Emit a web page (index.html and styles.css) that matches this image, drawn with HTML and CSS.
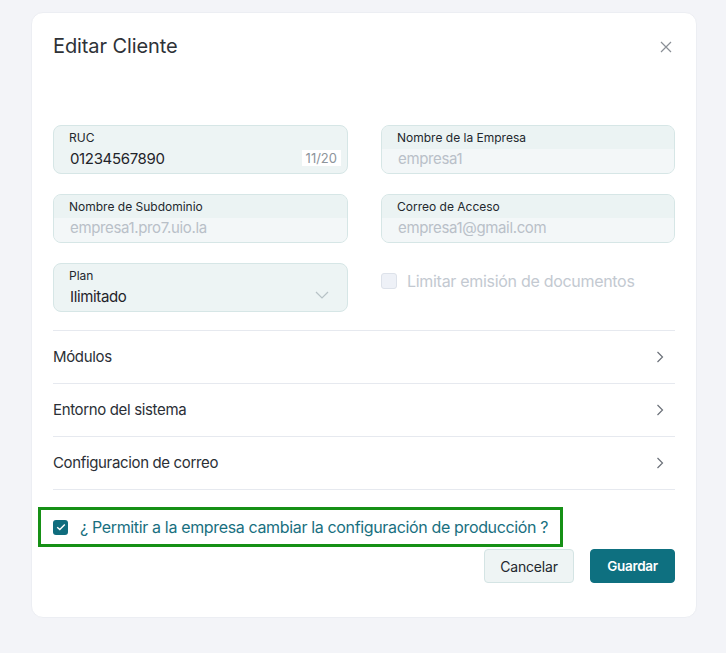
FILE: index.html
```html
<!DOCTYPE html>
<html lang="es">
<head>
<meta charset="utf-8">
<link rel="stylesheet" href="styles.css">
</head>
<body>
<div class="backdrop">
  <div class="modal">
    <div class="modal-header">
      <h1 class="title">Editar Cliente</h1>
      <button class="close" aria-label="Cerrar">
        <svg width="12" height="12" viewBox="0 0 12 12"><path d="M1 1L11 11M11 1L1 11" stroke="#8a8f96" stroke-width="1.2" fill="none"/></svg>
      </button>
    </div>

    <div class="fields">
      <div class="field">
        <div class="field-label">RUC</div>
        <div class="field-value">01234567890<span class="counter">11/20</span></div>
      </div>
      <div class="field disabled">
        <div class="field-label">Nombre de la Empresa</div>
        <div class="field-value">empresa1</div>
      </div>
      <div class="field disabled">
        <div class="field-label">Nombre de Subdominio</div>
        <div class="field-value">empresa1.pro7.uio.la</div>
      </div>
      <div class="field disabled">
        <div class="field-label">Correo de Acceso</div>
        <div class="field-value">empresa1@gmail.com</div>
      </div>
      <div class="field">
        <div class="field-label">Plan</div>
        <div class="field-value">Ilimitado
          <svg class="chev-down" width="14" height="8" viewBox="0 0 14 8"><path d="M1 1L7 7L13 1" stroke="#b7c2c6" stroke-width="1.2" fill="none"/></svg>
        </div>
      </div>
      <label class="check-disabled">
        <span class="box-disabled"></span>
        <span>Limitar emisión de documentos</span>
      </label>
    </div>

    <div class="sections">
      <div class="section-row"><span>Módulos</span><svg width="8" height="12" viewBox="0 0 8 12"><path d="M1.5 1L6.5 6L1.5 11" stroke="#6b7079" stroke-width="1.2" fill="none"/></svg></div>
      <div class="section-row"><span>Entorno del sistema</span><svg width="8" height="12" viewBox="0 0 8 12"><path d="M1.5 1L6.5 6L1.5 11" stroke="#6b7079" stroke-width="1.2" fill="none"/></svg></div>
      <div class="section-row"><span>Configuracion de correo</span><svg width="8" height="12" viewBox="0 0 8 12"><path d="M1.5 1L6.5 6L1.5 11" stroke="#6b7079" stroke-width="1.2" fill="none"/></svg></div>
    </div>

    <div class="permit">
      <span class="box-checked">
        <svg width="10" height="8" viewBox="0 0 10 8"><path d="M1.2 4.2L3.8 6.6L8.8 1.4" stroke="#fff" stroke-width="1.4" fill="none"/></svg>
      </span>
      <span class="permit-text">¿ Permitir a la empresa cambiar la configuración de producción ?</span>
    </div>

    <div class="actions">
      <button class="btn btn-cancel">Cancelar</button>
      <button class="btn btn-save">Guardar</button>
    </div>
  </div>
</div>
</body>
</html>
```
FILE: styles.css
```css
* { box-sizing: border-box; }
html, body { margin: 0; padding: 0; }
body {
  width: 726px;
  height: 653px;
  background: #f3f4f8;
  font-family: Inter, "Noto Sans", "Liberation Sans", sans-serif;
  color: #2b2f36;
  overflow: hidden;
}
.backdrop {
  padding: 12px 0 0 31px;
}
.modal {
  width: 666px;
  height: 606px;
  background: #fff;
  border-radius: 12px;
  border: 1px solid #eceef3;
  padding: 21px 21px 0 21px;
  display: flex;
  flex-direction: column;
}
.modal-header {
  display: flex;
  justify-content: space-between;
  align-items: flex-start;
  height: 91px;
}
.title {
  margin: 0;
  font-size: 20px;
  font-weight: 400;
  line-height: 24px;
  color: #2e3237;
  letter-spacing: -0.1px;
}
.close {
  border: 0;
  background: none;
  padding: 0;
  margin: 7px 3px 0 0;
  width: 12px;
  height: 12px;
  display: flex;
}
.fields {
  display: grid;
  grid-template-columns: 295px 294px;
  column-gap: 33px;
  row-gap: 20px;
}
.field {
  height: 49px;
  border: 1px solid #d6e6e6;
  border-radius: 8px;
  background: #edf4f4;
  overflow: hidden;
  display: flex;
  flex-direction: column;
}
.field-label {
  font-size: 12px;
  line-height: 15px;
  padding: 4px 15px 0 15px;
  height: 23px;
  color: #23282e;
}
.field-value {
  flex: 1;
  font-size: 15px;
  line-height: 20px;
  letter-spacing: -0.35px;
  padding: 0 6px 0 16px;
  color: #1f2329;
  display: flex;
  align-items: flex-start;
  justify-content: space-between;
}
.disabled .field-label { background: #ebf3f3; }
.disabled .field-value {
  background: #f3f7f8;
  color: #b9c0c8;
}
.counter {
  background: #fff;
  font-size: 13px;
  line-height: 16px;
  letter-spacing: 0;
  padding: 0 4px;
  color: #8d949b;
  margin-top: 1px;
}
.chev-down { margin: 4px 12px 0 0; }
.check-disabled {
  display: flex;
  align-items: center;
  gap: 10px;
  font-size: 16px;
  letter-spacing: -0.3px;
  color: #c3c9d1;
  height: 49px;
  padding-bottom: 14px;
}
.box-disabled {
  width: 16px;
  height: 16px;
  border-radius: 3px;
  background: #eef1f7;
  border: 1px solid #dde2ea;
}
.sections {
  margin-top: 18px;
  border-bottom: 1px solid #e6e9ef;
}
.section-row {
  height: 53px;
  border-top: 1px solid #e6e9ef;
  display: flex;
  align-items: center;
  justify-content: space-between;
  font-size: 15px;
  letter-spacing: -0.35px;
  color: #2b2f36;
  padding-right: 11px;
  padding-bottom: 1px;
}
.permit {
  margin: 17px 0 0 -15px;
  width: 525px;
  height: 40px;
  border: 3px solid #169016;
  display: flex;
  align-items: center;
  gap: 12px;
  padding-left: 12px;
  white-space: nowrap;
}
.box-checked {
  flex: none;
  width: 15px;
  height: 15px;
  border-radius: 3px;
  background: #0f6c7d;
  display: flex;
  align-items: center;
  justify-content: center;
}
.permit-text {
  font-size: 16px;
  letter-spacing: -0.35px;
  color: #19707f;
}
.actions {
  display: flex;
  justify-content: flex-end;
  gap: 16px;
  margin-top: 2px;
}
.btn {
  height: 34px;
  border-radius: 4px;
  font-family: inherit;
  font-size: 14px;
  padding: 0 8px;
  letter-spacing: -0.2px;
}
.btn-cancel {
  width: 90px;
  background: #eef4f4;
  border: 1px solid #d4e4e4;
  color: #23282e;
}
.btn-save {
  width: 85px;
  background: #0e7080;
  border: 1px solid #0e7080;
  color: #fff;
  font-weight: 600;
  font-size: 13.5px;
  letter-spacing: -0.3px;
}
```
